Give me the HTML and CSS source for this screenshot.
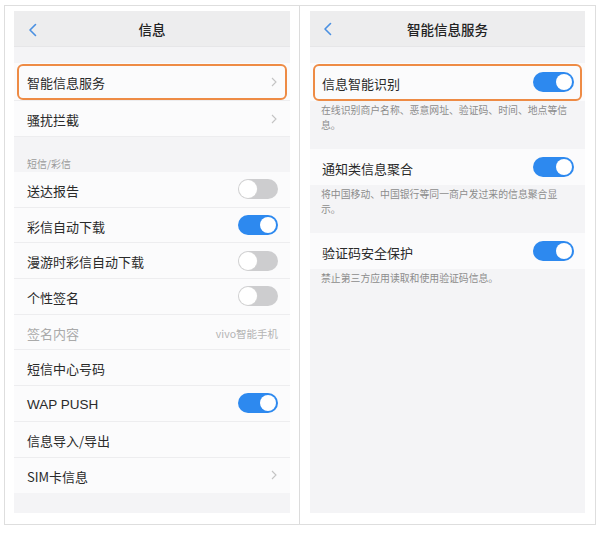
FILE: index.html
```html
<!DOCTYPE html>
<html lang="zh">
<head>
<meta charset="utf-8">
<link rel="stylesheet" href="styles.css">
</head>
<body>
<div class="frame">
  <div class="panel panel-left">
    <div class="screen">
      <div class="header">
        <svg class="back" width="10" height="14" viewBox="0 0 10 14"><polyline points="7.5,1.5 2,7 7.5,12.5" fill="none" stroke="#4a90e2" stroke-width="1.6" stroke-linecap="round" stroke-linejoin="round"/></svg>
        <span class="title">信息</span>
      </div>
      <div class="spacer"></div>
      <div class="row row-first highlight"><span class="label">智能信息服务</span><svg class="chev" width="6" height="10" viewBox="0 0 6 10"><polyline points="1,1 5,5 1,9" fill="none" stroke="#c4c4c4" stroke-width="1.1"/></svg></div>
      <div class="row"><span class="label">骚扰拦截</span><svg class="chev" width="6" height="10" viewBox="0 0 6 10"><polyline points="1,1 5,5 1,9" fill="none" stroke="#c4c4c4" stroke-width="1.1"/></svg></div>
      <div class="section">短信/彩信</div>
      <div class="list">
        <div class="row r"><span class="label">送达报告</span><span class="toggle off"></span></div>
        <div class="row r"><span class="label">彩信自动下载</span><span class="toggle on"></span></div>
        <div class="row r"><span class="label">漫游时彩信自动下载</span><span class="toggle off"></span></div>
        <div class="row r"><span class="label">个性签名</span><span class="toggle off"></span></div>
        <div class="row r"><span class="label disabled">签名内容</span><span class="value">vivo智能手机</span></div>
        <div class="row r"><span class="label">短信中心号码</span></div>
        <div class="row r"><span class="label latin">WAP PUSH</span><span class="toggle on"></span></div>
        <div class="row r"><span class="label">信息导入/导出</span></div>
        <div class="row r"><span class="label">SIM卡信息</span><svg class="chev" width="6" height="10" viewBox="0 0 6 10"><polyline points="1,1 5,5 1,9" fill="none" stroke="#c4c4c4" stroke-width="1.1"/></svg></div>
      </div>
    </div>
  </div>
  <div class="panel panel-right">
    <div class="screen">
      <div class="header">
        <svg class="back" width="10" height="14" viewBox="0 0 10 14"><polyline points="7.5,1.5 2,7 7.5,12.5" fill="none" stroke="#4a90e2" stroke-width="1.6" stroke-linecap="round" stroke-linejoin="round"/></svg>
        <span class="title">智能信息服务</span>
      </div>
      <div class="spacer"></div>
      <div class="row row-first highlight rr"><span class="label">信息智能识别</span><span class="toggle on"></span></div>
      <div class="desc">在线识别商户名称、恶意网址、验证码、时间、地点等信息。</div>
      <div class="row rr"><span class="label">通知类信息聚合</span><span class="toggle on"></span></div>
      <div class="desc">将中国移动、中国银行等同一商户发过来的信息聚合显示。</div>
      <div class="row rr"><span class="label">验证码安全保护</span><span class="toggle on"></span></div>
      <div class="desc">禁止第三方应用读取和使用验证码信息。</div>
    </div>
  </div>
</div>
</body>
</html>
```

FILE: styles.css
```css
* { box-sizing: border-box; }
html, body { margin: 0; padding: 0; background: #ffffff; }
body {
  font-family: "Noto Sans CJK SC", "Noto Sans", sans-serif;
  color: #2a2a2a;
  width: 600px;
  height: 533px;
  overflow: hidden;
}
.frame {
  margin: 5px 0 0 4px;
  width: 592px;
  height: 520px;
  border: 1px solid #dedede;
  display: flex;
}
.panel {
  height: 100%;
  padding-top: 5px;
  padding-bottom: 11px;
}
.panel-left {
  width: 295px;
  padding-left: 9px;
  padding-right: 9px;
  border-right: 1px solid #dcdcdc;
}
.panel-right {
  width: 295px;
  padding-left: 10px;
  padding-right: 10px;
}
.screen {
  height: 100%;
  background: #f4f4f6;
  display: flex;
  flex-direction: column;
  overflow: hidden;
}
.header {
  height: 36px;
  flex: none;
  background: #ededee;
  position: relative;
  display: flex;
  align-items: center;
  justify-content: center;
  border-bottom: 1px solid #e6e6e8;
}
.back {
  position: absolute;
  left: 14px;
  top: 12px;
}
.panel-right .back { left: 13px; top: 11px; }
.title {
  font-size: 13.5px;
  font-weight: 500;
  color: #222;
}
.spacer { height: 16px; flex: none; }
.row {
  flex: none;
  height: 36px;
  background: #fbfbfc;
  display: flex;
  align-items: center;
  justify-content: space-between;
  padding: 2px 12px 0 13px;
  position: relative;
  border-bottom: 1px solid #ededef;
}
.row-first { height: 38px; }
.highlight::after {
  content: "";
  position: absolute;
  left: 3px;
  right: 3px;
  top: 1px;
  bottom: 0;
  border: 2px solid #ee8b45;
  border-radius: 6px;
}
.label {
  font-size: 13px;
  line-height: 1;
  color: #2a2a2a;
}
.label.latin { font-family: "Liberation Sans", "Noto Sans CJK SC", sans-serif; font-size: 13.5px; }
.label.disabled { color: #aaaaaa; }
.value {
  font-size: 10.5px;
  color: #b4b4b4;
}
.chev { margin-right: 1px; margin-top: -2px; }
.section {
  flex: none;
  height: 35px;
  padding: 0 0 1px 13px;
  display: flex;
  align-items: flex-end;
  font-size: 10px;
  color: #9a9a9a;
}
.list .row { height: 35.7px; }
.list .row:last-child { border-bottom: none; }
.toggle {
  width: 40px;
  height: 20px;
  border-radius: 10px;
  position: relative;
  flex: none;
  margin-top: -2px;
}
.toggle::after {
  content: "";
  position: absolute;
  top: 2px;
  width: 16px;
  height: 16px;
  border-radius: 50%;
  background: #ffffff;
}
.toggle.on { background: #2d89ef; }
.toggle.on::after { right: 2px; }
.toggle.off { background: #cdcdcf; }
.toggle.off::after { left: 1px; top: 1px; width: 18px; height: 18px; box-shadow: 0 0 0 0.5px #d6d6d6; }
.rr { padding: 2px 11px 0 12px; border-bottom: none; }
.rr .toggle { width: 41px; }
.desc {
  flex: none;
  padding: 2px 14px 16px 11px;
  font-size: 9.85px;
  line-height: 15px;
  color: #8c8c8c;
}
```
